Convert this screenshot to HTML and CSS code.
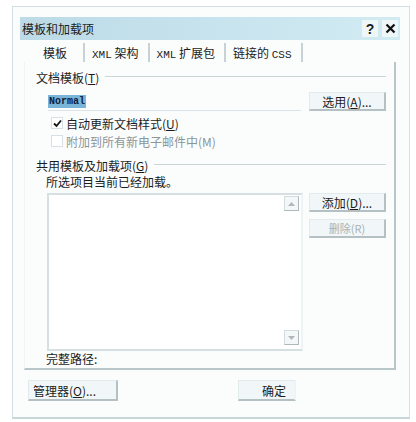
FILE: index.html
```html
<!DOCTYPE html>
<html>

<head>
    <title>模板和加载项</title>
    <link rel="stylesheet" href="styles.css">
</head>

<body>
    <div class="dialog">
        <div class="titlebar">
            <span class="title">模板和加载项</span>
            <div class="title-buttons">
                <span class="tb-btn">?</span>
                <span class="tb-btn">
                    <svg width="11" height="11" viewBox="0 0 11 11"><path d="M1.5 1.5 L9.5 9.5 M9.5 1.5 L1.5 9.5" stroke="#111" stroke-width="2.2"/></svg>
                </span>
            </div>
        </div>

        <div class="tabs">
            <span class="tab active">模板</span>
            <span class="tab"><span class="mono">XML</span> 架构</span>
            <span class="tab"><span class="mono">XML</span> 扩展包</span>
            <span class="tab">链接的 <span class="mono">CSS</span></span>
        </div>

        <div class="panel">
            <div class="group-label"><span>文档模板(<u>T</u>)</span><span class="rule"></span></div>

            <div class="template-row">
                <div class="template-input"><span class="selected">Normal</span></div>
                <button class="btn">选用(<u>A</u>)...</button>
            </div>

            <div class="check-row">
                <span class="checkbox">
                    <svg width="9" height="9" viewBox="0 0 9 9"><path d="M1 4.5 L3.5 7 L8 1.5" stroke="#111" stroke-width="1.8" fill="none"/></svg>
                </span>
                <span>自动更新文档样式(<u>U</u>)</span>
            </div>
            <div class="check-row disabled">
                <span class="checkbox"></span>
                <span>附加到所有新电子邮件中(M)</span>
            </div>

            <div class="group-label second"><span>共用模板及加载项(<u>G</u>)</span><span class="rule"></span></div>
            <div class="note">所选项目当前已经加载。</div>

            <div class="list-row">
                <div class="listbox">
                    <span class="arrow"><svg width="7" height="4" viewBox="0 0 7 4"><path d="M0 4 L3.5 0 L7 4 Z" fill="#b0b8ba"/></svg></span>
                    <span class="arrow"><svg width="7" height="4" viewBox="0 0 7 4"><path d="M0 0 L3.5 4 L7 0 Z" fill="#b0b8ba"/></svg></span>
                </div>
                <div class="list-buttons">
                    <button class="btn">添加(<u>D</u>)...</button>
                    <button class="btn disabled-btn">删除(R)</button>
                </div>
            </div>

            <div class="path">完整路径:</div>
        </div>

        <div class="footer">
            <button class="btn manager">管理器(<u>O</u>)...</button>
            <button class="btn ok">确定</button>
        </div>
    </div>
</body>

</html>
```

FILE: styles.css
```css
body {
    margin: 0;
    background-color: #fff;
    font-family: "Noto Sans CJK SC", "Noto Sans", sans-serif;
    font-size: 12px;
    color: #1c1c1c;
}

.dialog {
    margin: 6px 0 0 12px;
    width: 396px;
    height: 410px;
    border: 1px solid #d3dfe2;
    border-bottom: 2px solid #c9d6d9;
    background-color: #fbfdfd;
}

.titlebar {
    display: flex;
    justify-content: space-between;
    align-items: center;
    margin: 10px 9px 0 7px;
    height: 23px;
    padding-left: 2px;
    background: linear-gradient(to right, #bcdbe7, #d2ebf3);
}

.title {
    font-size: 12px;
    line-height: 23px;
}

.title-buttons {
    display: flex;
    gap: 4px;
    margin-right: 2px;
}

.tb-btn {
    display: flex;
    align-items: center;
    justify-content: center;
    width: 16px;
    height: 17px;
    background-color: #eef6f8;
    font-weight: bold;
    font-family: "Liberation Sans", sans-serif;
    font-size: 14px;
}

.tabs {
    display: flex;
    margin: 3px 0 0 30px;
    height: 19px;
}

.tab {
    padding: 0 9px 0 7px;
    border-right: 2px solid #c6d2d5;
    line-height: 19px;
}

.tab.active {
    padding: 0 16px 0 0;
}

.mono {
    font-family: "Liberation Mono", monospace;
    font-size: 11px;
}

.panel {
    margin: 0 13px 0 11px;
    height: 300px;
    padding: 6px 8px 0 11px;
    border-right: 2px solid #b9c6c9;
    border-bottom: 2px solid #b9c6c9;
    border-left: 1px solid #eef3f4;
}

.group-label {
    display: flex;
    align-items: center;
    gap: 6px;
    height: 18px;
}

.group-label.second {
    margin-top: 6px;
}

.rule {
    flex: 1;
    border-top: 1px solid #cad5d8;
    border-bottom: 1px solid #fff;
}

.template-row {
    display: flex;
    align-items: center;
    justify-content: space-between;
    margin: 6px 0 3px 12px;
}

.template-input {
    width: 253px;
    height: 17px;
    border-bottom: 1px solid #dbe4e6;
    display: flex;
    align-items: center;
}

.selected {
    background-color: #78b5d8;
    color: #10213a;
    font-family: "Liberation Mono", monospace;
    font-weight: bold;
    font-size: 10px;
    padding: 1px 1px;
}

.btn {
    font-family: inherit;
    font-size: 12px;
    color: #1c1c1c;
    width: 77px;
    height: 19px;
    padding: 0;
    background-color: #f1f7f8;
    border: 1px solid #e2eaec;
    border-right: 2px solid #b4c0c3;
    border-bottom: 2px solid #b4c0c3;
}

.check-row {
    display: flex;
    align-items: center;
    gap: 3px;
    margin-left: 15px;
    height: 18px;
}

.check-row.disabled {
    color: #8c9597;
}

.checkbox {
    display: flex;
    align-items: center;
    justify-content: center;
    width: 10px;
    height: 10px;
    border: 1px solid #d7e0e2;
    background-color: #fff;
}

.check-row:first-of-type .checkbox {
    border-color: #fff;
}

.note {
    margin: 0 0 0 10px;
    height: 16px;
    line-height: 16px;
}

.list-row {
    display: flex;
    justify-content: space-between;
    margin: 3px 0 0 11px;
}

.listbox {
    display: flex;
    flex-direction: column;
    justify-content: space-between;
    align-items: flex-end;
    width: 250px;
    height: 149px;
    padding: 1px 2px 4px 0;
    border: 2px solid #d6dfe1;
    border-right-color: #eef3f4;
    background-color: #fff;
}

.arrow {
    display: flex;
    align-items: center;
    justify-content: center;
    width: 13px;
    height: 13px;
    border: 1px solid #d3dcde;
    border-right-color: #aeb9bc;
    border-bottom-color: #aeb9bc;
    background-color: #f3f7f8;
}

.list-buttons {
    display: flex;
    flex-direction: column;
    gap: 7px;
}

.disabled-btn {
    color: #a8b1b3;
    font-size: 11px;
}

.path {
    margin: 0 0 0 10px;
    line-height: 16px;
}

.footer {
    display: flex;
    margin: 10px 0 0 15px;
}

.manager {
    width: 90px;
    height: 21px;
    text-align: left;
    padding-left: 4px;
}

.ok {
    width: 58px;
    height: 21px;
    margin-left: 120px;
    text-align: right;
    padding-right: 8px;
    border-right-color: #eef4f5;
}
```
